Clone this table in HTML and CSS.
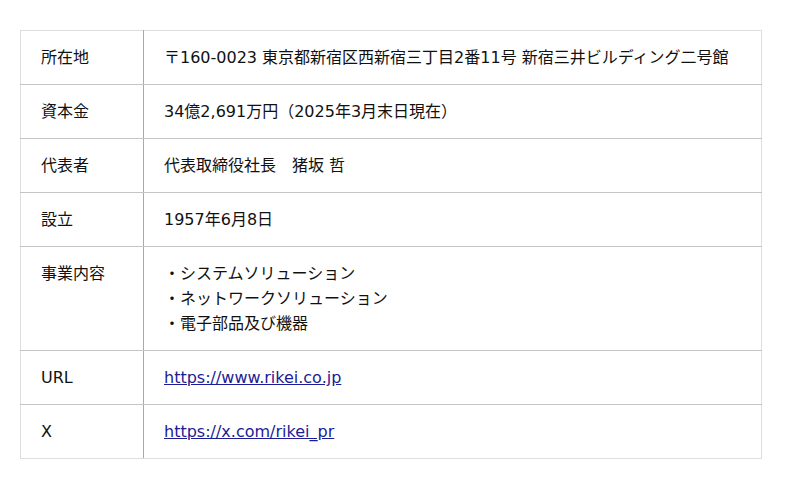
FILE: index.html
```html
<!DOCTYPE html>
<html lang="ja">
<head>
<meta charset="utf-8">
<link rel="stylesheet" href="styles.css">
</head>
<body>
<table class="info">
  <tr><th>所在地</th><td>〒160-0023 東京都新宿区西新宿三丁目2番11号 新宿三井ビルディング二号館</td></tr>
  <tr><th>資本金</th><td>34億2,691万円（2025年3月末日現在）</td></tr>
  <tr><th>代表者</th><td>代表取締役社長　猪坂 哲</td></tr>
  <tr><th>設立</th><td>1957年6月8日</td></tr>
  <tr><th>事業内容</th><td>・システムソリューション<br>・ネットワークソリューション<br>・電子部品及び機器</td></tr>
  <tr><th>URL</th><td><a href="#">https://www.rikei.co.jp</a></td></tr>
  <tr><th>X</th><td><a href="#">https://x.com/rikei_pr</a></td></tr>
</table>
</body>
</html>
```
FILE: styles.css
```css
html, body { background: #fff; }
body {
  margin: 30px 20px;
  font-family: "DejaVu Sans", "Noto Sans CJK JP", sans-serif;
  font-size: 16px;
  color: #111;
}
.info {
  width: 742px;
  border-collapse: collapse;
  border: 1px solid #ddd;
}
.info th, .info td {
  text-align: left;
  font-weight: normal;
  vertical-align: top;
  padding: 14px 20px;
  line-height: 25px;
  border-top: 1px solid #c4c4c4;
  border-bottom: 1px solid #c4c4c4;
}
.info tr:first-child th, .info tr:first-child td { border-top-color: #ddd; }
.info tr:last-child th, .info tr:last-child td { border-bottom-color: #ddd; }
.info th {
  width: 82px;
  border-right: 1px solid #a8a8a8;
}
.info a { color: #1c1c94; }
```
